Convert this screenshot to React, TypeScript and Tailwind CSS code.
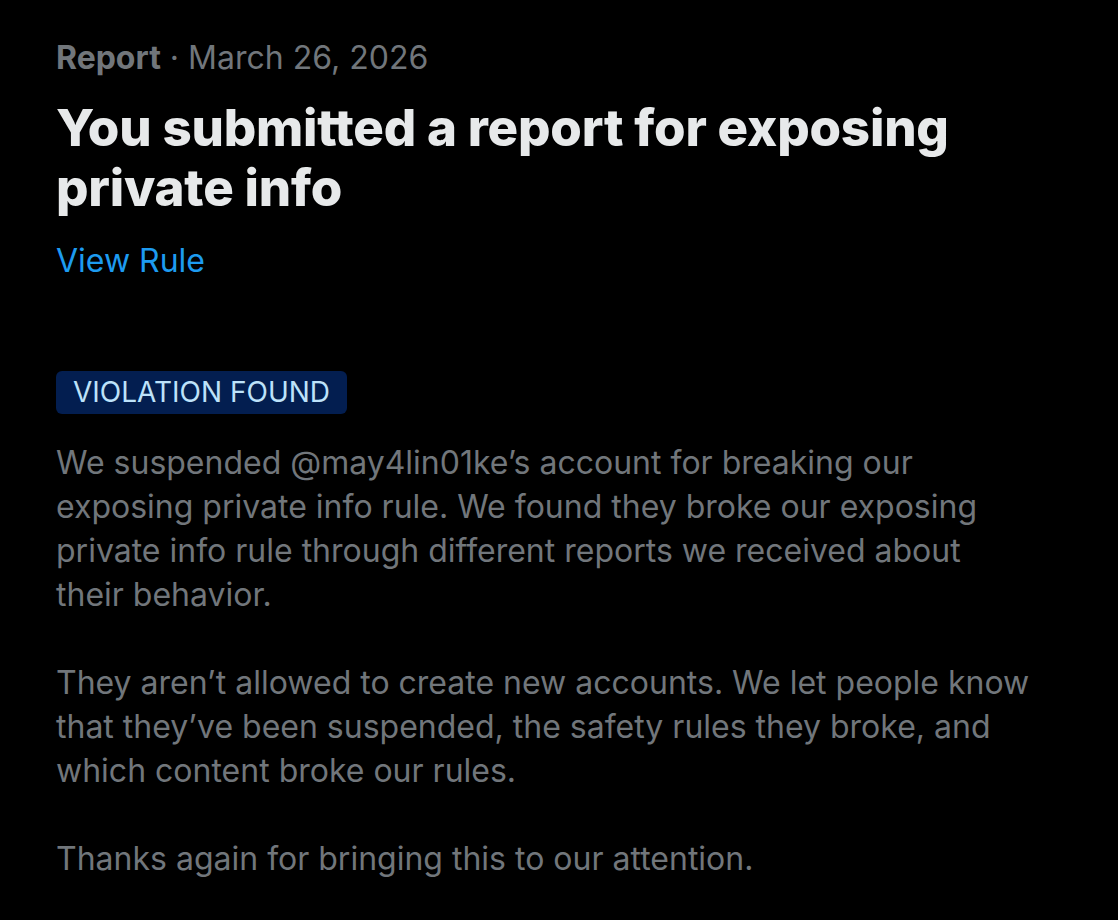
export default function App() {
  return (
    <div className="min-h-[920px] w-full bg-black px-[56px] pt-[38px] font-['Inter','Noto_Sans',sans-serif]">
      <div className="text-[32px] leading-[40px] text-[#71767b]">
        <span className="font-bold">Report</span>
        <span> · March 26, 2026</span>
      </div>
      <h1 className="mt-[20px] text-[51px] font-extrabold leading-[60px] tracking-[-0.2px] text-[#e7e9ea]">
        You submitted a report for exposing
        <br />
        private info
      </h1>
      <a className="mt-[23px] block text-[32px] leading-[40px] text-[#1d9bf0]">View Rule</a>
      <div className="mt-[90px]">
        <span className="inline-block rounded-[6px] bg-[#031e50] px-[17px] text-[28px] leading-[43px] text-[#bde2fa]">
          VIOLATION FOUND
        </span>
      </div>
      <div className="mt-[27px] max-w-[1040px] text-[32px] leading-[44px] text-[#71767b]">
        <p>
          We suspended @may4lin01ke’s account for breaking our
          <br />
          exposing private info rule. We found they broke our exposing
          <br />
          private info rule through different reports we received about
          <br />
          their behavior.
        </p>
        <p className="mt-[44px]">
          They aren’t allowed to create new accounts. We let people know
          <br />
          that they’ve been suspended, the safety rules they broke, and
          <br />
          which content broke our rules.
        </p>
        <p className="mt-[44px]">Thanks again for bringing this to our attention.</p>
      </div>
    </div>
  );
}
